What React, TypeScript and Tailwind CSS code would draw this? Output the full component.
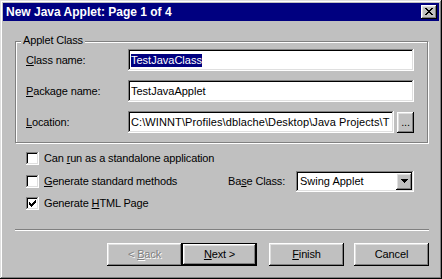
import React from "react";

const sunken =
  "shadow-[inset_-1px_-1px_#fff,inset_1px_1px_#808080,inset_-2px_-2px_#dfdfdf,inset_2px_2px_#000]";
const raised =
  "shadow-[inset_-1px_-1px_#000,inset_1px_1px_#fff,inset_-2px_-2px_#808080,inset_2px_2px_#dfdfdf]";

function Check({ checked }: { checked?: boolean }) {
  return (
    <div className={`w-[13px] h-[13px] bg-white shrink-0 relative ${sunken}`}>
      {checked && (
        <svg width="7" height="7" viewBox="0 0 7 7" className="absolute left-[3px] top-[3px]" shapeRendering="crispEdges">
          <path
            d="M6 0h1v1H6zM5 1h2v1H5zM0 2h1v1H0zM4 2h3v1H4zM0 3h2v1H0zM3 3h3v1H3zM0 4h5v1H0zM1 5h3v1H1zM2 6h1v1H2z"
            fill="#000"
          />
        </svg>
      )}
    </div>
  );
}

function Btn({ children, def, className = "" }: { children: React.ReactNode; def?: boolean; className?: string }) {
  return (
    <div
      className={`w-[75px] h-[23px] flex items-center justify-center bg-[#c0c0c0] ${
        def ? "border border-black" : ""
      } ${className}`}
    >
      <div className={`w-full h-full flex items-center justify-center ${raised}`}>{children}</div>
    </div>
  );
}

export default function App() {
  return (
    <div className="w-[442px] h-[279px] bg-[#c0c0c0] p-[3px] flex flex-col text-[11px] leading-[13px] tracking-[-0.15px] text-black [font-family:'Liberation_Sans',Arial,sans-serif] shadow-[inset_-1px_-1px_#000,inset_1px_1px_#dfdfdf,inset_-2px_-2px_#808080,inset_2px_2px_#fff]">
      {/* Title bar */}
      <div className="h-[18px] bg-[#000080] flex items-center justify-between pl-[3px] pr-[2px]">
        <span className="text-white font-bold text-[12px] tracking-normal">New Java Applet: Page 1 of 4</span>
        <div className={`w-[16px] h-[14px] bg-[#c0c0c0] flex items-center justify-center ${raised}`}>
          <svg width="8" height="7" viewBox="0 0 8 7" shapeRendering="crispEdges" className="mb-[1px] mr-[1px]">
            <path
              d="M0 0h2v1H0zM6 0h2v1H6zM1 1h2v1H1zM5 1h2v1H5zM2 2h4v1H2zM3 3h2v1H3zM2 4h4v1H2zM1 5h2v1H1zM5 5h2v1H5zM0 6h2v1H0zM6 6h2v1H6z"
              fill="#000"
            />
          </svg>
        </div>
      </div>

      <div className="flex flex-col pl-[12px]">
        {/* Group box */}
        <div className="relative mt-[20px] w-[413px] h-[102px] border border-[#808080] shadow-[inset_1px_1px_#fff,1px_1px_#fff] pt-[7px] pl-[10px] flex flex-col gap-[9px]">
          <span className="absolute left-[5px] top-[-8px] px-[2px] bg-[#c0c0c0]">Applet Class</span>
          <div className="flex items-center h-[22px]">
            <span className="w-[102px]">
              <u>C</u>lass name:
            </span>
            <div className={`w-[286px] h-[22px] bg-white flex items-center pl-[3px] tracking-normal ${sunken}`}>
              <span className="bg-[#000080] text-white">TestJavaClass</span>
            </div>
          </div>
          <div className="flex items-center h-[22px]">
            <span className="w-[102px]">
              <u>P</u>ackage name:
            </span>
            <div className={`w-[286px] h-[22px] bg-white flex items-center pl-[3px] tracking-normal ${sunken}`}>
              TestJavaApplet
            </div>
          </div>
          <div className="flex items-center h-[22px]">
            <span className="w-[102px]">
              <u>L</u>ocation:
            </span>
            <div className={`w-[266px] h-[22px] bg-white flex items-center pl-[3px] pr-[2px] overflow-hidden whitespace-nowrap tracking-[0.1px] ${sunken}`}>
              C:\WINNT\Profiles\dblache\Desktop\Java Projects\T
            </div>
            <div className={`ml-[3px] w-[17px] h-[21px] flex items-end justify-center pb-[4px] ${raised}`}>...</div>
          </div>
        </div>

        {/* Checkboxes */}
        <div className="mt-[4px] pl-[11px] flex flex-col">
          <div className="h-[23px] flex items-center gap-[5px]">
            <Check />
            <span>
              Can <u>r</u>un as a standalone application
            </span>
          </div>
          <div className="h-[22px] flex items-center">
            <div className="w-[202px] flex items-center gap-[5px]">
              <Check />
              <span>
                <u>G</u>enerate standard methods
              </span>
            </div>
            <span className="w-[68px]">
              Ba<u>s</u>e Class:
            </span>
            <div className={`w-[118px] h-[21px] bg-white flex items-center justify-between pl-[4px] pr-[2px] tracking-normal ${sunken}`}>
              <span>Swing Applet</span>
              <div className={`w-[16px] h-[17px] bg-[#c0c0c0] flex items-center justify-center ${raised}`}>
                <svg width="7" height="4" viewBox="0 0 7 4" shapeRendering="crispEdges">
                  <path d="M0 0h7v1H0zM1 1h5v1H1zM2 2h3v1H2zM3 3h1v1H3z" fill="#000" />
                </svg>
              </div>
            </div>
          </div>
          <div className="h-[22px] flex items-center gap-[5px]">
            <Check checked />
            <span>
              Generate <u>H</u>TML Page
            </span>
          </div>
        </div>

        {/* Separator */}
        <div className="mt-[15px] w-[414px] h-[2px] border-t border-t-[#808080] border-b border-b-white" />

        {/* Buttons */}
        <div className="mt-[12px] flex pl-[92px]">
          <Btn>
            <span className="text-[#808080] [text-shadow:1px_1px_#fff]">
              &lt; <u>B</u>ack
            </span>
          </Btn>
          <Btn def>
            <span>
              <u>N</u>ext &gt;
            </span>
          </Btn>
          <Btn className="ml-[12px]">
            <span>
              <u>F</u>inish
            </span>
          </Btn>
          <Btn className="ml-[10px]">
            <span>Cancel</span>
          </Btn>
        </div>
      </div>
    </div>
  );
}
